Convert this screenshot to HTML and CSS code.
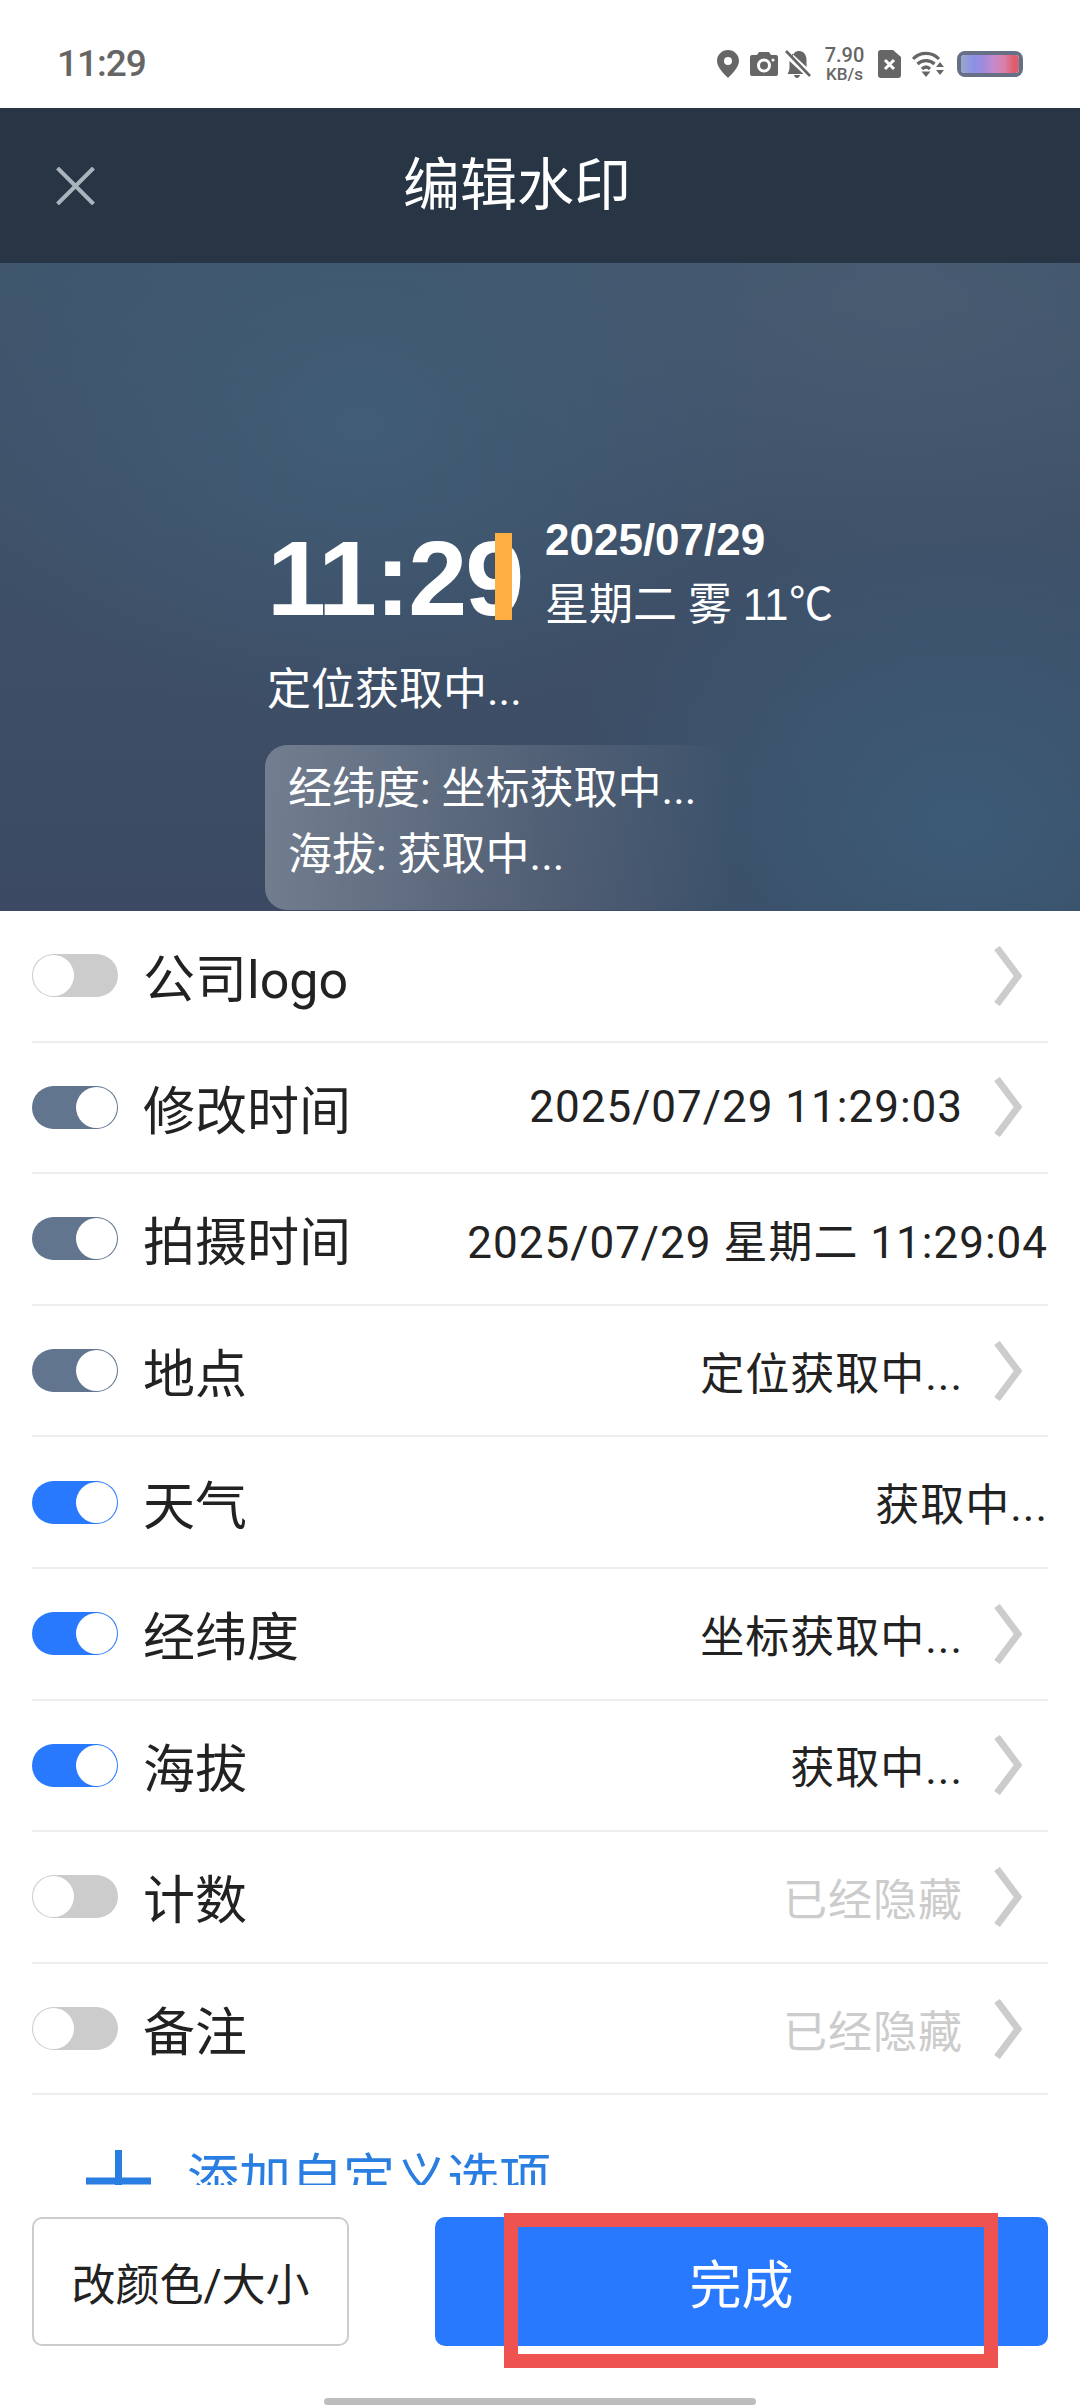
FILE: index.html
```html
<!DOCTYPE html>
<html lang="zh-CN">
<head>
<meta charset="utf-8">
<title>编辑水印</title>
<link rel="stylesheet" href="styles.css">
</head>
<body>
<div class="app">
  <header class="status">
    <span class="status-time">11:29</span>
    <div class="status-icons">
      <svg class="ic-pin" width="22" height="28" viewBox="0 0 22 28"><path fill="#666" fill-rule="evenodd" d="M11 0C5 0 0 4.800 0 10.800 0 17.500 7 24 11 28c4-4 11-10.500 11-17.200C22 4.800 17 0 11 0zm0 7a4 4 0 1 1 0 8 4 4 0 0 1 0-8z"/></svg>
      <svg class="ic-cam" width="28" height="24" viewBox="0 0 28 24"><path fill="#666" fill-rule="evenodd" d="M2 3h5l2-3h10l2 3h5a2 2 0 0 1 2 2v17a2 2 0 0 1-2 2H2a2 2 0 0 1-2-2V5a2 2 0 0 1 2-2zm12 3.500a7 7 0 1 0 0 14 7 7 0 0 0 0-14zm0 3a4 4 0 1 1 0 8 4 4 0 0 1 0-8zM23 6.500a1.500 1.500 0 1 0 0 3 1.500 1.500 0 0 0 0-3z"/></svg>
      <svg class="ic-bell" width="26" height="28" viewBox="0 0 26 28"><path fill="#666" d="M7 7.500C8.500 3 10.500 1 14 1c5 0 7.500 4 7.500 9v7L7 3.500zM4.500 11 18.500 24H2.500c1.500-2.500 2-4.500 2-7zM9 25h6c-.5 2-1.500 3-3 3s-2.500-1-3-3z"/><path stroke="#666" stroke-width="2.600" d="M1 1l24 25"/></svg>
      <div class="speed"><span class="speed-num">7.90</span><span class="speed-unit">KB/s</span></div>
      <svg class="ic-sim" width="23" height="28" viewBox="0 0 23 28"><path fill="#666" d="M3 0h12l8 7v18a3 3 0 0 1-3 3H3a3 3 0 0 1-3-3V3a3 3 0 0 1 3-3z"/><path stroke="#fff" stroke-width="3" d="M7 10l9 9M16 10l-9 9"/></svg>
      <svg class="ic-wifi" width="33" height="26" viewBox="0 0 33 26"><g fill="none" stroke="#666" stroke-width="3.200"><path d="M1 8c7-7.500 19-7.500 26 0"/><path d="M5.500 13c4.500-4.500 12.500-4.500 17 0"/><path d="M10 18c2.500-2.500 5.500-2.500 8 0"/></g><path fill="#666" d="M9.500 20.500h9L14 26zM28 11l4 5h-8zM24 19h8l-4 5z"/></svg>
      <div class="battery"><div class="battery-fill"></div></div>
    </div>
  </header>

  <div class="topbar">
    <svg class="close" width="39" height="38" viewBox="0 0 39 38"><path stroke="#a9b4bd" stroke-width="4" d="M1.500 1 37.500 37M37.500 1 1.500 37"/></svg>
    <h1 class="title">编辑水印</h1>
  </div>

  <section class="preview">
    <div class="clock-row">
      <span class="clock">11:29</span>
      <span class="accent"></span>
      <div class="date-col">
        <span class="date">2025/07/29</span>
        <span class="weather">星期二 雾 <span class="temp">11℃</span></span>
      </div>
    </div>
    <p class="place">定位获取中...</p>
    <div class="coords">
      <p class="coord-line">经纬度: 坐标获取中...</p>
      <p class="coord-line">海拔: 获取中...</p>
    </div>
  </section>

  <main class="list">
    <div class="row"><span class="toggle off"><i class="knob"></i></span><span class="label">公司logo</span><span class="value"></span><svg class="chev" width="28" height="60" viewBox="0 0 28 60"><path fill="none" stroke="#ccc" stroke-width="7" d="M3 2l21 28L3 58"/></svg></div>
    <div class="row"><span class="toggle muted"><i class="knob"></i></span><span class="label">修改时间</span><span class="value">2025/07/29 11:29:03</span><svg class="chev" width="28" height="60" viewBox="0 0 28 60"><path fill="none" stroke="#ccc" stroke-width="7" d="M3 2l21 28L3 58"/></svg></div>
    <div class="row"><span class="toggle muted"><i class="knob"></i></span><span class="label">拍摄时间</span><span class="value">2025/07/29 星期二 11:29:04</span></div>
    <div class="row"><span class="toggle muted"><i class="knob"></i></span><span class="label">地点</span><span class="value">定位获取中...</span><svg class="chev" width="28" height="60" viewBox="0 0 28 60"><path fill="none" stroke="#ccc" stroke-width="7" d="M3 2l21 28L3 58"/></svg></div>
    <div class="row"><span class="toggle on"><i class="knob"></i></span><span class="label">天气</span><span class="value">获取中...</span></div>
    <div class="row"><span class="toggle on"><i class="knob"></i></span><span class="label">经纬度</span><span class="value">坐标获取中...</span><svg class="chev" width="28" height="60" viewBox="0 0 28 60"><path fill="none" stroke="#ccc" stroke-width="7" d="M3 2l21 28L3 58"/></svg></div>
    <div class="row"><span class="toggle on"><i class="knob"></i></span><span class="label">海拔</span><span class="value">获取中...</span><svg class="chev" width="28" height="60" viewBox="0 0 28 60"><path fill="none" stroke="#ccc" stroke-width="7" d="M3 2l21 28L3 58"/></svg></div>
    <div class="row"><span class="toggle off"><i class="knob"></i></span><span class="label">计数</span><span class="value hidden">已经隐藏</span><svg class="chev" width="28" height="60" viewBox="0 0 28 60"><path fill="none" stroke="#ccc" stroke-width="7" d="M3 2l21 28L3 58"/></svg></div>
    <div class="row"><span class="toggle off"><i class="knob"></i></span><span class="label">备注</span><span class="value hidden">已经隐藏</span><svg class="chev" width="28" height="60" viewBox="0 0 28 60"><path fill="none" stroke="#ccc" stroke-width="7" d="M3 2l21 28L3 58"/></svg></div>
    <div class="add">
      <svg class="plus" width="65" height="62" viewBox="0 0 65 62"><path stroke="#2a7de1" stroke-width="7" d="M32.500 0v62M0 31h65"/></svg>
      <span class="add-text">添加自定义选项</span>
    </div>
  </main>

  <footer class="footer">
    <div class="actions">
      <button class="btn-ghost">改颜色/大小</button>
      <button class="btn-done">完成</button>
    </div>
    <div class="home"></div>
    <div class="highlight"></div>
  </footer>
</div>
</body>
</html>
```

FILE: styles.css
```css
* { box-sizing: border-box; }
html, body { margin: 0; padding: 0; background: #fff; }
body { font-family: Roboto, "Noto Sans CJK SC", sans-serif; color: #222; }
p, h1 { margin: 0; font-weight: 400; }

.app { width: 1080px; height: 2408px; display: flex; flex-direction: column; overflow: hidden; }

/* status bar */
.status { height: 108px; flex: none; display: flex; align-items: center; justify-content: space-between; padding: 0 57px 0 57px; background: #fff; }
.status-time { font-size: 37px; font-weight: 500; color: #666; letter-spacing: -1px; position: relative; top: 9px; }
.status-icons { display: flex; align-items: center; position: relative; top: 10px; }
.ic-cam { margin-left: 11px; }
.ic-bell { margin-left: 7px; }
.speed { margin-left: 13px; width: 41px; display: flex; flex-direction: column; align-items: center; color: #666; line-height: 1; }
.speed-num { font-size: 20px; font-weight: 500; }
.speed-unit { font-size: 17px; font-weight: 500; margin-top: 1px; }
.ic-sim { margin-left: 13px; }
.ic-wifi { margin-left: 11px; }
.battery { margin-left: 12px; width: 66px; height: 26px; border: 4px solid #666f85; border-radius: 8px; overflow: hidden; }
.battery-fill { height: 100%; background: linear-gradient(90deg, #9aa6c8 0%, #8c90e8 22%, #a28ad8 40%, #c48ad0 55%, #d880a8 75%, #e05a68 92%, #c86878 100%); }

/* title bar */
.topbar { height: 155px; flex: none; background: #283545; display: flex; align-items: center; padding-left: 56px; position: relative; }
.close { flex: none; }
.title { margin-left: 308px; color: #fff; font-size: 57px; line-height: 1; }

/* preview */
.preview {
  height: 648px; flex: none; overflow: hidden; padding: 255px 0 0 267px; color: #fff;
  background:
    radial-gradient(420px 300px at 360px 160px, rgba(66,96,122,.75), rgba(66,96,122,0) 100%),
    radial-gradient(420px 320px at 960px 560px, rgba(60,92,120,.9), rgba(60,92,120,0) 100%),
    radial-gradient(500px 260px at 900px 40px, rgba(74,92,114,.8), rgba(74,92,114,0) 100%),
    linear-gradient(180deg, #3f566d 0%, #3e5068 45%, #3b4a62 100%);
}
.clock-row { display: flex; align-items: flex-start; }
.clock { width: 228px; font-family: "Liberation Sans Narrow", "Liberation Sans", sans-serif; font-weight: 700; font-size: 106px; line-height: 104px; letter-spacing: -2px; margin-top: 8px; }
.accent { width: 17px; height: 87px; background: #ffae42; margin-top: 15px; }
.date-col { margin-left: 33px; display: flex; flex-direction: column; }
.date { font-family: "Liberation Sans Narrow", "Liberation Sans", sans-serif; font-weight: 700; font-size: 44px; line-height: 44px; }
.weather { font-size: 44px; line-height: 50px; margin-top: 18px; white-space: nowrap; }
.temp { font-family: "Liberation Sans Narrow", "Liberation Sans", sans-serif; }
.place { font-size: 44px; line-height: 60px; margin-top: 30px; letter-spacing: 0; }
.coords { width: 470px; height: 165px; margin: 25px 0 0 -2px; padding: 11px 0 0 23px; border-radius: 22px; background: linear-gradient(90deg, rgba(255,255,255,.28), rgba(255,255,255,0)); }
.coord-line { font-size: 44px; line-height: 66px; white-space: nowrap; }

/* list */
.list { height: 1274px; flex: none; overflow: hidden; padding: 0 32px; background: #fff; }
.row { height: 131.6px; display: flex; align-items: center; border-bottom: 2px solid #eee; }
.toggle { width: 86px; height: 43px; flex: none; border-radius: 22px; position: relative; display: block; }
.toggle.off { background: #ccc; }
.toggle.muted { background: #62758f; }
.toggle.on { background: #2979ff; }
.knob { position: absolute; top: 1px; width: 41px; height: 41px; border-radius: 50%; background: #fff; }
.off .knob { left: 1px; }
.muted .knob, .on .knob { right: 1px; }
.label { margin-left: 25px; font-size: 52px; white-space: nowrap; color: #222; }
.value { margin-left: auto; font-size: 44px; letter-spacing: 1px; white-space: nowrap; color: #222; }
.value.hidden { color: #ccc; }
.chev { flex: none; margin: 0 26px 0 31px; }
.add { display: flex; align-items: flex-start; padding: 55px 0 0 54px; height: 120px; }
.plus { flex: none; }
.add-text { margin-left: 36px; font-size: 52px; line-height: 1.2; color: #2a7de1; margin-top: -1px; white-space: nowrap; }

/* footer */
.footer { flex: 1; position: relative; background: #fff; display: flex; flex-direction: column; padding: 32px 32px 0; }
.actions { display: flex; justify-content: space-between; }
.btn-ghost { width: 317px; height: 129px; background: #fff; border: 2px solid #ccc; border-radius: 10px; font: 400 44px Roboto, "Noto Sans CJK SC", sans-serif; color: #222; padding: 0; }
.btn-done { width: 613px; height: 129px; background: #2979ff; border: none; border-radius: 10px; font: 400 52px Roboto, "Noto Sans CJK SC", sans-serif; color: #fff; padding: 0; }
.home { width: 432px; height: 7px; margin: 52px auto 0; background: #bdbdbd; border-radius: 4px; }
.highlight { position: absolute; left: 504px; top: 28px; width: 494px; height: 155px; border: 14px solid #ef5350; }
```
